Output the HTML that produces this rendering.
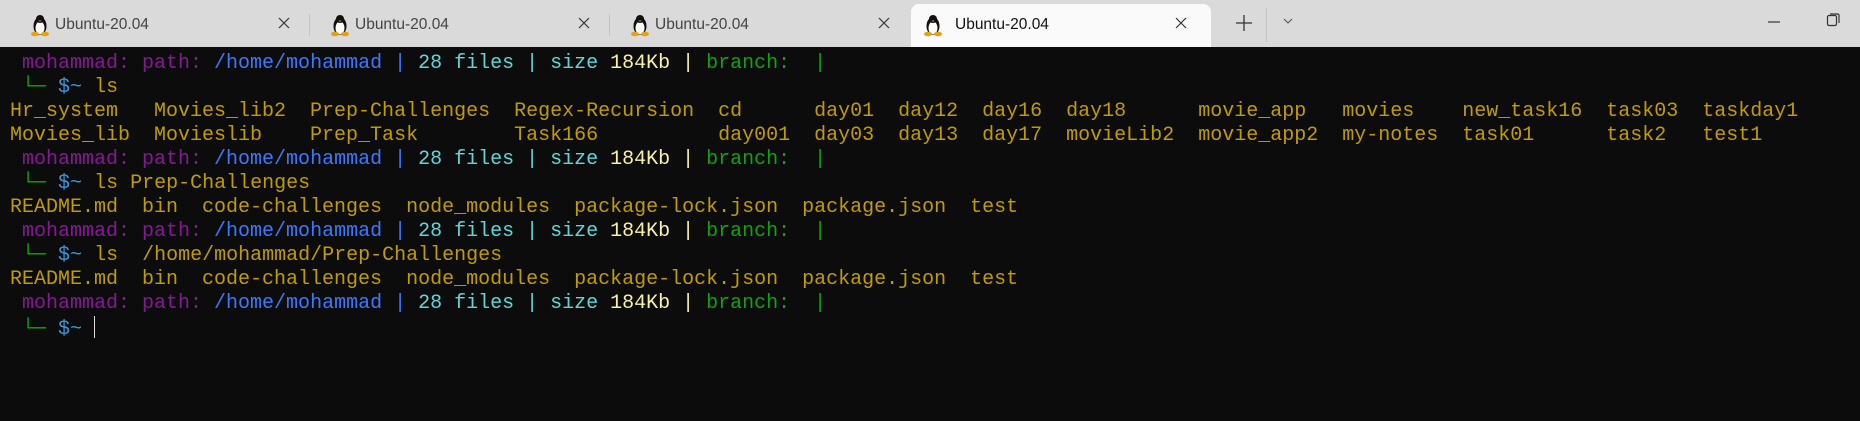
<!DOCTYPE html>
<html><head><meta charset="utf-8"><style>
*{margin:0;padding:0;box-sizing:border-box}
body{width:1860px;height:421px;background:#0c0c0c;overflow:hidden;font-family:"Liberation Sans",sans-serif}
#bar{position:absolute;left:0;top:0;width:1860px;height:47px;background:#dadada}
.tab{position:absolute;top:4px;height:43px;width:300px}
.tab.active{background:#fafafa;border-radius:8px 8px 0 0}
.tab .ico{position:absolute;left:26px;top:9px}
.tab .t{position:absolute;left:51px;top:12px;font-size:15.5px;color:#444}
.tab.active .t{color:#111}
.tab .x{position:absolute;left:272px;top:11px}
.sep{position:absolute;top:14px;width:1px;height:22px;background:#c4c4c4}
#term{position:absolute;left:10px;top:52px;font-family:"Liberation Mono",monospace;font-size:20px;line-height:24px;white-space:pre;color:#c19c00}
.p{color:#881798}.b{color:#3b78ff}.c{color:#61d6d6}.w{color:#f9f1a5}.g{color:#13a10e}.d{color:#3a96dd}
.cur{display:inline-block;width:1px;height:22px;background:#ddd;vertical-align:-4px}
</style></head><body>
<div id="bar">
<div class="tab" style="left:4px"><svg class="ico" width="20" height="24" viewBox="0 0 20 24"><ellipse cx="10" cy="13" rx="6.5" ry="9" fill="#111"/><ellipse cx="10" cy="15" rx="4.5" ry="6.5" fill="#fff"/><circle cx="10" cy="6" r="4" fill="#111"/><ellipse cx="5" cy="21" rx="4" ry="2.3" fill="#e8a00c"/><ellipse cx="15" cy="21" rx="4" ry="2.3" fill="#e8a00c"/><path d="M8.5 7.5h3l-1.5 1.5z" fill="#e8a00c"/></svg><span class="t">Ubuntu-20.04</span><svg class="x" width="16" height="16"><path d="M3 3L13 13M13 3L3 13" stroke="#333" stroke-width="1.2"/></svg></div>
<div class="sep" style="left:309px"></div>
<div class="tab" style="left:304px"><svg class="ico" width="20" height="24" viewBox="0 0 20 24"><ellipse cx="10" cy="13" rx="6.5" ry="9" fill="#111"/><ellipse cx="10" cy="15" rx="4.5" ry="6.5" fill="#fff"/><circle cx="10" cy="6" r="4" fill="#111"/><ellipse cx="5" cy="21" rx="4" ry="2.3" fill="#e8a00c"/><ellipse cx="15" cy="21" rx="4" ry="2.3" fill="#e8a00c"/><path d="M8.5 7.5h3l-1.5 1.5z" fill="#e8a00c"/></svg><span class="t">Ubuntu-20.04</span><svg class="x" width="16" height="16"><path d="M3 3L13 13M13 3L3 13" stroke="#333" stroke-width="1.2"/></svg></div>
<div class="sep" style="left:609px"></div>
<div class="tab" style="left:604px"><svg class="ico" width="20" height="24" viewBox="0 0 20 24"><ellipse cx="10" cy="13" rx="6.5" ry="9" fill="#111"/><ellipse cx="10" cy="15" rx="4.5" ry="6.5" fill="#fff"/><circle cx="10" cy="6" r="4" fill="#111"/><ellipse cx="5" cy="21" rx="4" ry="2.3" fill="#e8a00c"/><ellipse cx="15" cy="21" rx="4" ry="2.3" fill="#e8a00c"/><path d="M8.5 7.5h3l-1.5 1.5z" fill="#e8a00c"/></svg><span class="t">Ubuntu-20.04</span><svg class="x" width="16" height="16"><path d="M3 3L13 13M13 3L3 13" stroke="#333" stroke-width="1.2"/></svg></div>
<div class="tab active" style="left:911px;width:300px"><svg class="ico" style="left:12px" width="20" height="24" viewBox="0 0 20 24"><ellipse cx="10" cy="13" rx="6.5" ry="9" fill="#111"/><ellipse cx="10" cy="15" rx="4.5" ry="6.5" fill="#fff"/><circle cx="10" cy="6" r="4" fill="#111"/><ellipse cx="5" cy="21" rx="4" ry="2.3" fill="#e8a00c"/><ellipse cx="15" cy="21" rx="4" ry="2.3" fill="#e8a00c"/><path d="M8.5 7.5h3l-1.5 1.5z" fill="#e8a00c"/></svg><span class="t" style="left:44px">Ubuntu-20.04</span><svg class="x" style="left:262px" width="16" height="16"><path d="M3 3L13 13M13 3L3 13" stroke="#333" stroke-width="1.2"/></svg></div>
<svg style="position:absolute;left:1234px;top:13px" width="20" height="20"><path d="M10 2V18M2 10H18" stroke="#333" stroke-width="1.3"/></svg>
<div class="sep" style="left:1266px;top:8px;height:34px"></div>
<svg style="position:absolute;left:1282px;top:15px" width="12" height="12"><path d="M2 4L6 8L10 4" stroke="#555" fill="none" stroke-width="1.1"/></svg>
<svg style="position:absolute;left:1766px;top:14px" width="16" height="16"><path d="M2 8H14" stroke="#333" stroke-width="1.2"/></svg>
<svg style="position:absolute;left:1826px;top:12px" width="16" height="16"><rect x="1.5" y="3.5" width="9" height="10" rx="1.5" fill="none" stroke="#333" stroke-width="1.2"/><path d="M4 2H11.5Q13 2 13 3.5V11" fill="none" stroke="#333" stroke-width="1.2"/></svg>
</div>
<div id="term"> <span class="p">mohammad: path: </span><span class="b">/home/mohammad | </span><span class="c">28 files | size </span><span class="w">184Kb | </span><span class="g">branch:  |</span>
 <span class="g">└─</span> <span class="d">$~</span> ls
Hr_system   Movies_lib2  Prep-Challenges  Regex-Recursion  cd      day01  day12  day16  day18      movie_app   movies    new_task16  task03  taskday1
Movies_lib  Movieslib    Prep_Task        Task166          day001  day03  day13  day17  movieLib2  movie_app2  my-notes  task01      task2   test1
 <span class="p">mohammad: path: </span><span class="b">/home/mohammad | </span><span class="c">28 files | size </span><span class="w">184Kb | </span><span class="g">branch:  |</span>
 <span class="g">└─</span> <span class="d">$~</span> ls Prep-Challenges
README.md  bin  code-challenges  node_modules  package-lock.json  package.json  test
 <span class="p">mohammad: path: </span><span class="b">/home/mohammad | </span><span class="c">28 files | size </span><span class="w">184Kb | </span><span class="g">branch:  |</span>
 <span class="g">└─</span> <span class="d">$~</span> ls  /home/mohammad/Prep-Challenges
README.md  bin  code-challenges  node_modules  package-lock.json  package.json  test
 <span class="p">mohammad: path: </span><span class="b">/home/mohammad | </span><span class="c">28 files | size </span><span class="w">184Kb | </span><span class="g">branch:  |</span>
 <span class="g">└─</span> <span class="d">$~</span> <span class="cur"></span></div>
</body></html>
